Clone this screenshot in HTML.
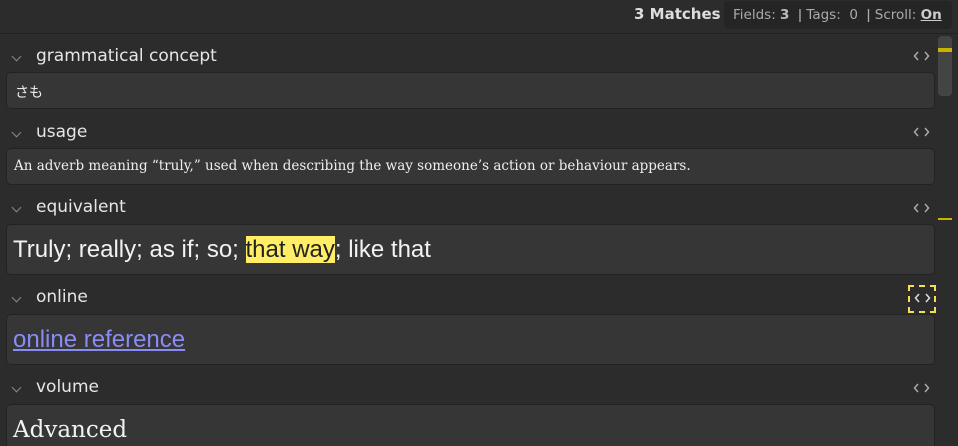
<!DOCTYPE html>
<html><head><style>
*{margin:0;padding:0;box-sizing:border-box}
html,body{width:958px;height:446px;overflow:hidden}
body{background:#2c2c2c;position:relative;font-family:"DejaVu Sans","Liberation Sans",sans-serif;color:#eee}
.top{position:absolute;left:0;top:0;width:958px;height:34px;border-bottom:1px solid #222;background:#2c2c2c}
.m{position:absolute;left:634px;top:5px;font-size:15px;font-weight:bold;color:#ddd}
.badge{position:absolute;left:724px;top:1px;width:228px;height:28px;background:#252525;border-radius:4px;font-size:13.5px;color:#aaa;padding:6px 0 0 9px;white-space:nowrap}
.badge b{color:#bbb}
.lab{position:absolute;left:36px;font-size:17px;color:#e6e6e6}
.chev{position:absolute;left:13px;width:7px;height:7px;border-right:1.5px solid #888;border-bottom:1.5px solid #888;transform:rotate(45deg)}
.code{position:absolute;left:913px;width:17px;height:12px}
.f{position:absolute;left:6px;width:929px;background:#363636;border:1px solid #232323;border-radius:5px}
.sb{position:absolute;left:938px;top:36px;width:14px;height:60px;background:#444;border-radius:4px}
</style></head><body>
<div class="top"><div class="m">3 Matches</div><div class="badge">Fields: <b>3</b> &nbsp;ǀ Tags: &nbsp;0 &nbsp;ǀ Scroll: <b style="text-decoration:underline;color:#ccc">On</b></div></div>
<div class="sb"></div>
<div style="position:absolute;left:938px;top:48px;width:14px;height:4px;background:#c8b400"></div>
<div style="position:absolute;left:938px;top:218px;width:14px;height:2px;background:#c8b400"></div>

<div class="chev" style="top:53px"></div><div class="lab" style="top:46px">grammatical concept</div>
<svg class="code" style="top:50px" viewBox="0 0 17 12"><path d="M5 2L1.5 6L5 10M12 2L15.5 6L12 10" stroke="#aaa" stroke-width="1.5" fill="none"/></svg>
<div class="f" style="top:72px;height:37px;padding:9px 0 0 8px;font-size:14px;font-family:'Noto Sans CJK JP',sans-serif">さも</div>

<div class="chev" style="top:129px"></div><div class="lab" style="top:122px">usage</div>
<svg class="code" style="top:126px" viewBox="0 0 17 12"><path d="M5 2L1.5 6L5 10M12 2L15.5 6L12 10" stroke="#aaa" stroke-width="1.5" fill="none"/></svg>
<div class="f" style="top:148px;height:37px;padding:9px 0 0 7px;font-size:13.5px;font-family:'DejaVu Serif',serif;white-space:nowrap">An adverb meaning “truly,” used when describing the way someone’s action or behaviour appears.</div>

<div class="chev" style="top:204px"></div><div class="lab" style="top:197px">equivalent</div>
<svg class="code" style="top:202px" viewBox="0 0 17 12"><path d="M5 2L1.5 6L5 10M12 2L15.5 6L12 10" stroke="#aaa" stroke-width="1.5" fill="none"/></svg>
<div class="f" style="top:224px;height:51px;padding:11px 0 0 6px;font-size:24px;font-family:'Liberation Sans',sans-serif;color:#f2f2f2">Truly; really; as if; so; <span style="background:#ffee66;color:#222">that way</span>; like that</div>

<div class="chev" style="top:294px"></div><div class="lab" style="top:287px">online</div>
<div style="position:absolute;left:908px;top:285px;width:28px;height:28px;border:2px dashed #f5e050"></div>
<svg class="code" style="top:292px;left:914px" viewBox="0 0 17 12"><path d="M5 2L1.5 6L5 10M12 2L15.5 6L12 10" stroke="#ddd" stroke-width="1.5" fill="none"/></svg>
<div class="f" style="top:314px;height:51px;padding:11px 0 0 6px;font-size:24px;font-family:'Liberation Sans',sans-serif"><span style="color:#8a8cf5;text-decoration:underline">online reference</span></div>

<div class="chev" style="top:384px"></div><div class="lab" style="top:377px">volume</div>
<svg class="code" style="top:382px" viewBox="0 0 17 12"><path d="M5 2L1.5 6L5 10M12 2L15.5 6L12 10" stroke="#aaa" stroke-width="1.5" fill="none"/></svg>
<div class="f" style="top:404px;height:60px;padding:12px 0 0 6px;font-size:23px;font-family:'DejaVu Serif',serif;color:#f2f2f2">Advanced</div>
</body></html>
